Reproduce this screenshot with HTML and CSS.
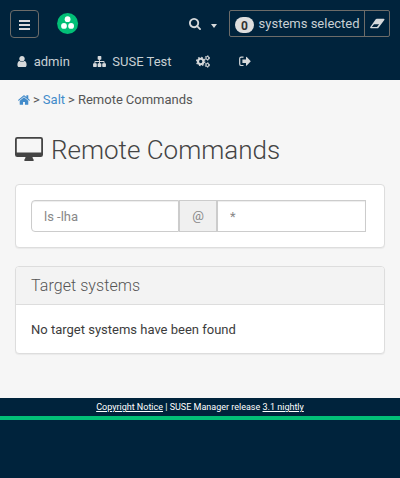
FILE: index.html
```html
<!DOCTYPE html>
<html lang="en">
<head>
<meta charset="utf-8">
<title>Remote Commands</title>
<link rel="stylesheet" href="styles.css">
</head>
<body>
<header class="header">
  <div class="bar">
    <button class="toggle" aria-label="Menu"><span></span><span></span><span></span></button>
    <svg class="logo" viewBox="0 0 22 22"><circle cx="10.600" cy="11.500" r="10.500" fill="#02bf77"/><g fill="#fff"><circle cx="10.600" cy="7.200" r="2.900"/><circle cx="7" cy="13.900" r="2.900"/><circle cx="14.100" cy="13.900" r="2.900"/></g></svg>
    <div class="tools">
      <svg class="search" viewBox="64 128 1664 1664"><path d="M1216 832q0-185-131.500-316.500t-316.500-131.500-316.500 131.500-131.500 316.500 131.500 316.500 316.500 131.500 316.500-131.500 131.500-316.500zm512 832q0 52-38 90t-90 38q-54 0-90-38l-343-342q-179 124-399 124-143 0-273.500-55.500t-225-150-150-225-55.500-273.500 55.500-273.500 150-225 225-150 273.500-55.500 273.500 55.500 225 150 150 225 55.500 273.500q0 220-124 399l343 343q37 37 37 90z"/></svg>
      <span class="caret"></span>
      <div class="selection">
        <div class="count"><b class="badge">0</b><span>systems selected</span></div>
        <div class="clear"><svg class="eraser" viewBox="0 0 15 12"><path fill-rule="evenodd" d="M5.700 1.200Q6.100.8 6.700.8H13.700Q14.900 1 14.300 2L8.500 9.700Q8.100 10.300 7.500 10.300H.9Q-.3 10 .3 8.900ZM7 9.100 9.100 6.300H4L1.800 9.100Z"/></svg></div>
      </div>
    </div>
  </div>
  <nav class="nav">
    <a class="user"><svg class="i-user" viewBox="256 128 1280 1536"><path d="M1536 1399q0 109-62.500 187t-150.500 78h-854q-88 0-150.500-78t-62.500-187q0-85 8.500-160.500t31.500-152 58.500-131 94-89 134.500-34.500q131 128 313 128t313-128q76 0 134.500 34.500t94 89 58.500 131 31.500 152 8.500 160.500zm-256-887q0 159-112.500 271.500t-271.500 112.500-271.500-112.500-112.500-271.500 112.500-271.500 271.500-112.500 271.500 112.500 112.500 271.500z"/></svg>admin</a>
    <a class="org"><svg class="i-org" viewBox="0 128 1792 1536"><path d="M1792 1248v320q0 40-28 68t-68 28h-320q-40 0-68-28t-28-68v-320q0-40 28-68t68-28h96v-192h-512v192h96q40 0 68 28t28 68v320q0 40-28 68t-68 28h-320q-40 0-68-28t-28-68v-320q0-40 28-68t68-28h96v-192h-512v192h96q40 0 68 28t28 68v320q0 40-28 68t-68 28h-320q-40 0-68-28t-28-68v-320q0-40 28-68t68-28h96v-192q0-52 38-90t90-38h512v-192h-96q-40 0-68-28t-28-68v-320q0-40 28-68t68-28h320q40 0 68 28t28 68v320q0 40-28 68t-68 28h-96v192h512q52 0 90 38t38 90v192h96q40 0 68 28t28 68z"/></svg>SUSE Test</a>
    <a class="cogs"><svg class="i-cogs" viewBox="0 0 14 13"><g fill="none" stroke="#d6d9db"><circle cx="4.700" cy="6.500" r="2.700" stroke-width="2.100"/><circle cx="4.700" cy="6.500" r="4.100" stroke-width="1.200" stroke-dasharray="1.610 1.610"/><circle cx="11.400" cy="3" r="1.500" stroke-width="1.200"/><circle cx="11.400" cy="3" r="2.300" stroke-width=".9" stroke-dasharray="1.200 1.200"/><circle cx="11.400" cy="10" r="1.500" stroke-width="1.200"/><circle cx="11.400" cy="10" r="2.300" stroke-width=".9" stroke-dasharray="1.200 1.200"/></g></svg></a>
    <a class="out"><svg class="i-out" viewBox="0 0 12 11"><path d="M4.500 1.100H2.300Q.7 1.100.7 2.700V7.900Q.7 9.500 2.300 9.500H4.500" fill="none" stroke="#d6d9db" stroke-width="1.200"/><path d="M3.400 3.600H7V1.200Q7.200.6 7.800 1L11.800 5.300 7.800 9.600Q7.200 10 7 9.400V7H3.400Z"/></svg></a>
  </nav>
</header>
<main class="main">
  <div class="crumbs"><a><svg class="i-home" viewBox="89 253 1614 1283"><path d="M1472 992v480q0 26-19 45t-45 19h-384v-384h-256v384h-384q-26 0-45-19t-19-45v-480q0-1 .5-3t.5-3l575-474 575 474q1 2 1 6zm223-69l-62 74q-8 9-21 11h-3q-13 0-21-7l-692-577-692 577q-12 8-24 7-13-2-21-11l-62-74q-8-10-7-23.500t11-21.500l719-599q32-26 76-26t76 26l244 204v-195q0-14 9-23t23-9h192q14 0 23 9t9 23v408l219 182q10 8 11 21.500t-7 23.500z"/></svg></a> &gt; <a>Salt</a> &gt; Remote Commands</div>
  <h1 class="title"><svg class="i-desktop" viewBox="0 0 28 25"><path fill-rule="evenodd" d="M2.300 0H25.700Q28 0 28 2.300V17.700Q28 20 25.700 20H17.500Q17.500 21.400 18.600 22.500V24H9.400V22.500Q10.500 21.400 10.500 20H2.300Q0 20 0 17.700V2.300Q0 0 2.300 0ZM2.500 1.700Q1.800 1.700 1.800 2.400V15.400H26.200V2.400Q26.200 1.700 25.500 1.700Z"/></svg>Remote Commands</h1>
  <section class="panel command">
    <div class="group"><input class="field first" placeholder="ls -lha"><span class="addon">@</span><input class="field" placeholder="*"></div>
  </section>
  <section class="panel">
    <h2 class="heading">Target systems</h2>
    <div class="body">No target systems have been found</div>
  </section>
</main>
<footer class="footer"><u>Copyright Notice</u> | SUSE Manager release <u>3.1 nightly</u></footer>
</body>
</html>
```
FILE: styles.css
```css
* { box-sizing: border-box; }
body { margin: 0; min-height: 478px; background: #00233c; color: #3c3c3c; font: 13px/20px Roboto, sans-serif; }
svg { display: block; flex: none; }
.header { height: 80px; color: #c8d0d4; fill: #d6d9db; }
.bar { display: flex; align-items: flex-start; padding: 10px 10px 0; height: 48px; }
.toggle { display: flex; flex-direction: column; align-items: center; gap: 2px; width: 29px; height: 28px; padding: 9px 0 0; background: none; border: 1px solid #6d6c69; border-radius: 4px; }
.toggle span { width: 11px; height: 2px; background: #dadada; }
.logo { width: 22px; height: 22px; margin: 2px 0 0 18px; }
.tools { display: flex; margin-left: auto; }
.search { width: 12px; height: 12px; margin-top: 8px; }
.caret { width: 0; height: 0; margin: 14px 12px 0 10px; border: 3px solid transparent; border-top: 4px solid #d6d9db; border-bottom: 0; }
.selection { display: flex; width: 161px; height: 27px; border: 1px solid #6d6c69; border-radius: 2px; line-height: 25px; }
.count { display: flex; width: 135px; padding-left: 5px; border-right: 1px solid #6d6c69; white-space: nowrap; }
.badge { width: 19px; height: 16px; margin: 6px 4.600px 0 0; border-radius: 8px; background: #dedede; color: #333; font-size: 12px; line-height: 18px; text-align: center; font-weight: 700; }
.eraser { width: 15px; height: 12px; margin: 7px 0 0 5px; }
.nav { display: flex; height: 27px; align-items: center; padding-left: 17px; }
.nav a { display: flex; align-items: center; }
.i-user { width: 10px; height: 11px; margin-right: 6.700px; }
.org { margin-left: 23px; }
.i-org { width: 13px; height: 11px; margin-right: 6.500px; }
.cogs { margin-left: 24.500px; }
.i-cogs { width: 14px; height: 13px; }
.out { margin-left: 29px; }
.i-out { width: 12px; height: 11px; }
.main { height: 318px; padding: 10px 15px 0; background: #f6f6f6; }
.crumbs { padding-left: 3px; color: #555; word-spacing: -.2px; }
.crumbs a { color: #428bca; fill: #428bca; }
.i-home { display: inline-block; width: 12px; height: 10px; vertical-align: -1px; }
.title { display: flex; align-items: center; margin: 24px 0 18px; height: 32px; color: #444; fill: #444; font-size: 26px; font-weight: 300; line-height: 32px; }
.i-desktop { width: 28px; height: 25px; margin: -2px 8px 0 0; }
.panel { margin-bottom: 18px; background: #fff; border: 1px solid #ddd; border-radius: 4px; box-shadow: 0 1px 1px rgba(0, 0, 0, .05); }
.command { height: 64px; padding: 15px; }
.group { display: flex; width: 335px; height: 32px; }
.field { width: 149px; min-width: 0; padding: 1px 12px 0; border: 1px solid #ccc; border-radius: 0; background: #fff; box-shadow: inset 0 1px 1px rgba(0, 0, 0, .075); font: inherit; }
.first { width: 148px; border-radius: 4px 0 0 4px; }
.field::placeholder { color: #888; opacity: 1; }
.addon { width: 38px; border: 1px solid #ccc; background: #f0f0f0; color: #888; line-height: 30px; text-align: center; }
.heading { height: 38px; margin: 0; padding: 0 15px; border-bottom: 1px solid #ddd; border-radius: 3px 3px 0 0; background: #f3f3f3; color: #555; font-size: 16px; font-weight: 300; line-height: 37px; letter-spacing: .07px; }
.body { height: 48px; padding: 15px 15px 0; }
.footer { height: 22px; border-bottom: 4px solid #02bf77; color: #fff; font-size: 9px; line-height: 18px; text-align: center; }
```
